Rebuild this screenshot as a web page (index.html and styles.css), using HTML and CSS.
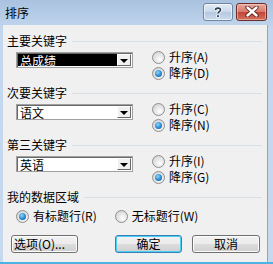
FILE: index.html
```html
<!DOCTYPE html>
<html lang="zh-CN">
<head>
    <meta charset="UTF-8">
    <title>排序</title>
    <link rel="stylesheet" href="styles.css">
</head>
<body>
    <div class="window">
        <!-- Title bar -->
        <div class="titlebar">
            <span class="title">排序</span>
            <div class="caption-btns">
                <button class="cap help">
                    <svg width="12" height="12" viewBox="0 0 12 12">
                        <path d="M3.5 4 C3.5 1.5 8.5 1.5 8.5 4 C8.5 5.6 6 5.6 6 7.5" fill="none" stroke="#fff" stroke-width="3.4"/>
                        <rect x="4.3" y="8.6" width="3.4" height="3" fill="#fff"/>
                        <path d="M3.5 4 C3.5 1.5 8.5 1.5 8.5 4 C8.5 5.6 6 5.6 6 7.5" fill="none" stroke="#2b3a4e" stroke-width="1.6"/>
                        <rect x="5.1" y="9.2" width="1.8" height="1.8" fill="#2b3a4e"/>
                    </svg>
                </button>
                <button class="cap close">
                    <svg width="14" height="11" viewBox="0 0 14 11">
                        <path d="M2.5 1.5 L11.5 9.5 M11.5 1.5 L2.5 9.5" stroke="#5a1e1a" stroke-width="4.2" stroke-linecap="round"/>
                        <path d="M2.5 1.5 L11.5 9.5 M11.5 1.5 L2.5 9.5" stroke="#fff" stroke-width="2.4" stroke-linecap="round"/>
                    </svg>
                </button>
            </div>
        </div>

        <div class="client">
            <section class="group">
                <div class="group-head"><span>主要关键字</span><i class="rule"></i></div>
                <div class="group-body">
                    <div class="combo">
                        <span class="combo-text selected">总成绩</span>
                        <span class="combo-btn"><i class="arrow"></i></span>
                    </div>
                    <div class="radios">
                        <label class="radio"><span class="dot"></span>升序(A)</label>
                        <label class="radio checked"><span class="dot"></span>降序(D)</label>
                    </div>
                </div>
            </section>

            <section class="group">
                <div class="group-head"><span>次要关键字</span><i class="rule"></i></div>
                <div class="group-body">
                    <div class="combo">
                        <span class="combo-text">语文</span>
                        <span class="combo-btn"><i class="arrow"></i></span>
                    </div>
                    <div class="radios">
                        <label class="radio"><span class="dot"></span>升序(C)</label>
                        <label class="radio checked"><span class="dot"></span>降序(N)</label>
                    </div>
                </div>
            </section>

            <section class="group">
                <div class="group-head"><span>第三关键字</span><i class="rule"></i></div>
                <div class="group-body">
                    <div class="combo">
                        <span class="combo-text">英语</span>
                        <span class="combo-btn"><i class="arrow"></i></span>
                    </div>
                    <div class="radios">
                        <label class="radio"><span class="dot"></span>升序(I)</label>
                        <label class="radio checked"><span class="dot"></span>降序(G)</label>
                    </div>
                </div>
            </section>

            <section class="group">
                <div class="group-head"><span>我的数据区域</span><i class="rule"></i></div>
                <div class="range-row">
                    <label class="radio checked"><span class="dot"></span>有标题行(R)</label>
                    <label class="radio"><span class="dot"></span>无标题行(W)</label>
                </div>
            </section>

            <div class="footer">
                <button class="btn options">选项(O)...</button>
                <button class="btn default">确定</button>
                <button class="btn">取消</button>
            </div>
        </div>
    </div>
</body>
</html>
```

FILE: styles.css
```css
/* Reset */
* {
    box-sizing: border-box;
    margin: 0;
    padding: 0;
}

body {
    background: #3a4656;
    font-family: "Noto Sans CJK SC", "DejaVu Sans", sans-serif;
    font-size: 12px;
    color: #000;
}

/* Window frame */
.window {
    width: 273px;
    height: 264px;
    background: linear-gradient(#a9c2df, #c3d7ee 30px, #c6d9ee);
    border-bottom: 2px solid #4eb3e3;
    display: flex;
    flex-direction: column;
}

/* Title bar */
.titlebar {
    height: 25px;
    display: flex;
    align-items: center;
    padding-left: 5px;
}

.title {
    font-size: 12px;
    line-height: 14px;
    margin-top: 1px;
}

.caption-btns {
    margin-left: auto;
    margin-right: 6px;
    margin-top: -2px;
    display: flex;
    gap: 3px;
}

.cap {
    width: 30px;
    height: 18px;
    border-radius: 3px;
    display: flex;
    align-items: center;
    justify-content: center;
}

.help {
    border: 1px solid #6f86a3;
    background: linear-gradient(#e3ecf6, #c8d8ea 50%, #b4c8e0 51%, #c9dbee);
    box-shadow: inset 0 0 0 1px rgba(255, 255, 255, 0.6);
}

.close {
    width: 31px;
    border: 1px solid #6b2b26;
    background: linear-gradient(#e8a89d, #d5786b 50%, #c24537 51%, #d2715c);
    box-shadow: inset 0 0 0 1px rgba(255, 220, 210, 0.5);
}

/* Client area */
.client {
    flex: 1;
    margin: 0 5px 0 3px;
    background: #f0f0f0;
    border-right: 1px solid #9aa3ae;
    padding-top: 9px;
}

.group {
    margin-bottom: 5px;
}

.group-head {
    display: flex;
    align-items: center;
    height: 14px;
    line-height: 14px;
    padding-left: 4px;
    padding-right: 5px;
}

.rule {
    flex: 1;
    height: 1px;
    margin-left: 5px;
    margin-top: 1px;
    background: #d5dfe5;
}

.group-body {
    display: flex;
    margin-top: 1px;
}

/* Combo box */
.combo {
    width: 117px;
    height: 16px;
    margin: 3px 0 0 13px;
    display: flex;
    background: #fff;
    border: 1px solid #a0a0a0;
    box-shadow: inset 1px 1px 0 #696969;
    padding: 1px 1px 1px 1px;
}

.combo-text {
    flex: 1;
    line-height: 13px;
    padding-left: 2px;
}

.combo-text.selected {
    background: #000;
    color: #fff;
}

.combo-btn {
    width: 14px;
    background: #f0f0f0;
    border: 1px solid;
    border-color: #fff #696969 #696969 #fff;
    display: flex;
    align-items: center;
    justify-content: center;
}

.arrow {
    width: 0;
    height: 0;
    border-left: 4px solid transparent;
    border-right: 4px solid transparent;
    border-top: 4px solid #000;
    margin-top: 1px;
}

/* Radio buttons */
.radios {
    margin-left: 19px;
}

.radio {
    display: flex;
    align-items: center;
    height: 16px;
    line-height: 14px;
}

.dot {
    width: 13px;
    height: 13px;
    border-radius: 50%;
    border: 1px solid #8f8f8f;
    background: radial-gradient(circle at 60% 65%, #ffffff, #e6e6e6 45%, #cbcbcb);
    margin-right: 4px;
    position: relative;
}

.radio.checked .dot::after {
    content: "";
    position: absolute;
    left: 2px;
    top: 2px;
    width: 7px;
    height: 7px;
    border-radius: 50%;
    background: radial-gradient(circle at 40% 35%, #8fd6f7, #2a8ad0 55%, #0d4e8f);
}

.range-row {
    display: flex;
    margin: 4px 0 0 13px;
}

.range-row .radio + .radio {
    margin-left: 18px;
}

/* Footer buttons */
.footer {
    display: flex;
    gap: 10px;
    margin-top: 11px;
    padding: 0 7px 0 8px;
}

.btn {
    width: 68px;
    height: 18px;
    font-family: inherit;
    font-size: 12px;
    line-height: 14px;
    border: 1px solid #707070;
    border-radius: 3px;
    background: linear-gradient(#f2f2f2, #ebebeb 50%, #dddddd 51%, #cfcfcf);
    box-shadow: inset 0 0 0 1px #fcfcfc;
}

.btn.options {
    width: 67px;
    margin-right: auto;
    text-align: left;
    padding-left: 2px;
}

.btn.default {
    width: 67px;
    border-color: #3c7fb1;
    box-shadow: inset 0 0 0 1px #48d0f8;
}
```
